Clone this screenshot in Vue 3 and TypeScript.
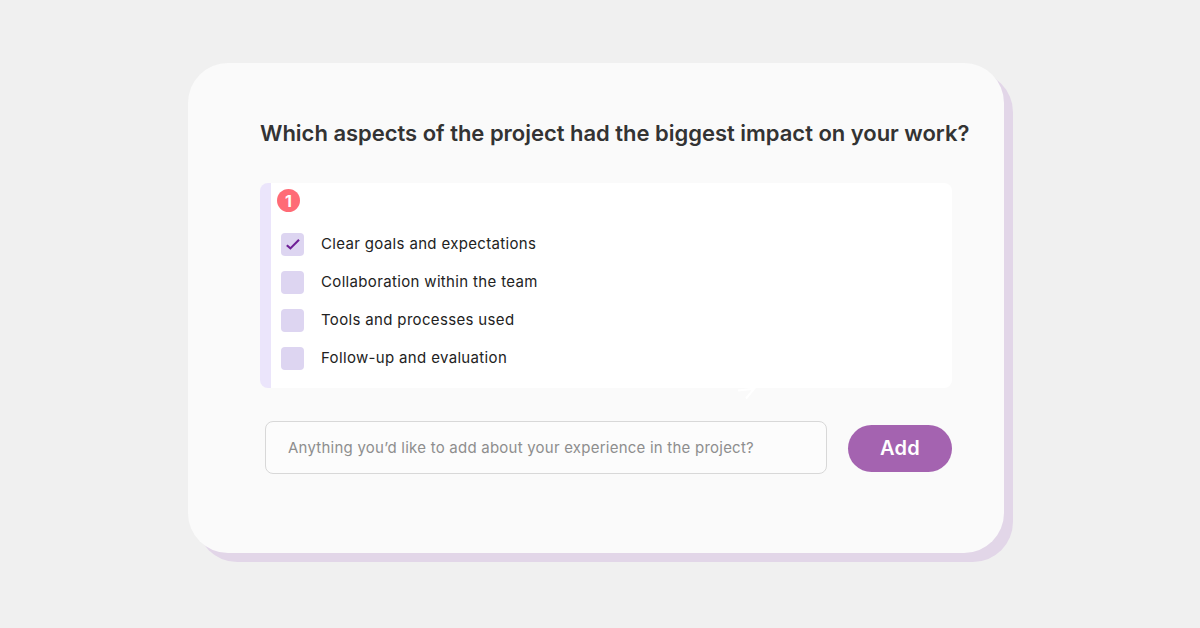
<script setup lang="ts">
const options = [
  { label: 'Clear goals and expectations', checked: true },
  { label: 'Collaboration within the team', checked: false },
  { label: 'Tools and processes used', checked: false },
  { label: 'Follow-up and evaluation', checked: false },
]
</script>

<template>
  <main class="page">
    <section class="card">
      <h1 class="title">Which aspects of the project had the biggest impact on your work?</h1>
      <div class="panel">
        <span class="badge">1</span>
        <ul class="options">
          <li v-for="o in options" :key="o.label" class="option">
            <span class="box">
              <svg v-if="o.checked" class="check" width="14" height="11" viewBox="0 0 14 11" fill="none">
                <path d="M0.8 6.2 L4.4 9.4 L13 0.8" stroke="#6f1f96" stroke-width="2.1" />
              </svg>
            </span>
            <span class="label">{{ o.label }}</span>
          </li>
        </ul>
        <svg class="tick" width="18" height="13" viewBox="0 0 18 13" fill="none">
          <path d="M0 3.5 L16 1.8 L8 11.5" stroke="#ffffff" stroke-width="2" />
        </svg>
      </div>
      <div class="entry">
        <div class="input">Anything you’d like to add about your experience in the project?</div>
        <button class="add">Add</button>
      </div>
    </section>
  </main>
</template>

<style>
html, body { margin: 0; background: #f0f0f0; }
</style>

<style scoped>
.page {
  width: 1200px;
  height: 628px;
  box-sizing: border-box;
  padding: 63px 0 0 188px;
  background: #f0f0f0;
  font-family: Inter, "Liberation Sans", sans-serif;
  overflow: hidden;
}
.card {
  width: 816px;
  height: 490px;
  box-sizing: border-box;
  padding: 57px 52px 0 72px;
  background: #fafafa;
  border-radius: 40px;
  box-shadow: 9px 9px 0 #e2d6e8;
}
.title {
  margin: 0 -20px 0 0;
  font-size: 22px;
  line-height: 26px;
  font-weight: 600;
  letter-spacing: -0.02px;
  color: #333333;
  white-space: nowrap;
}
.panel {
  position: relative;
  margin-top: 37px;
  height: 205px;
  box-sizing: border-box;
  padding: 6px 0 0 6px;
  background: #ffffff;
  border-left: 11px solid #ebe5fb;
  border-radius: 8px;
}
.badge {
  display: flex;
  align-items: center;
  justify-content: center;
  width: 23px;
  height: 23px;
  border-radius: 50%;
  background: #ff6b76;
  color: #ffffff;
  font-size: 16px;
  font-weight: 700;
}
.options {
  list-style: none;
  margin: 19px 0 0 4px;
  padding: 0;
  display: flex;
  flex-direction: column;
  gap: 14px;
}
.option {
  display: flex;
  align-items: center;
  gap: 17px;
  height: 24px;
}
.box {
  display: flex;
  align-items: center;
  justify-content: center;
  width: 23px;
  height: 23px;
  margin-top: 2px;
  border-radius: 4px;
  background: #ddd5f1;
}
.check {
  margin-top: 1px;
}
.label {
  font-size: 15px;
  letter-spacing: 0.34px;
  color: #222222;
}
.tick {
  position: absolute;
  left: 467px;
  top: 204px;
}
.entry {
  display: flex;
  align-items: center;
  margin: 33px 0 0 5px;
  gap: 21px;
}
.input {
  width: 562px;
  height: 53px;
  box-sizing: border-box;
  display: flex;
  align-items: center;
  padding-left: 22px;
  border: 1px solid #d8d8d8;
  border-radius: 8px;
  background: #fcfcfc;
  color: #8e8e8e;
  font-size: 15px;
  letter-spacing: 0.23px;
  white-space: nowrap;
}
.add {
  width: 104px;
  height: 47px;
  margin-top: 1px;
  border: none;
  padding: 0;
  border-radius: 24px;
  background: #a463b0;
  color: #ffffff;
  font-family: inherit;
  font-size: 20px;
  font-weight: 600;
  letter-spacing: 0.3px;
}
</style>
